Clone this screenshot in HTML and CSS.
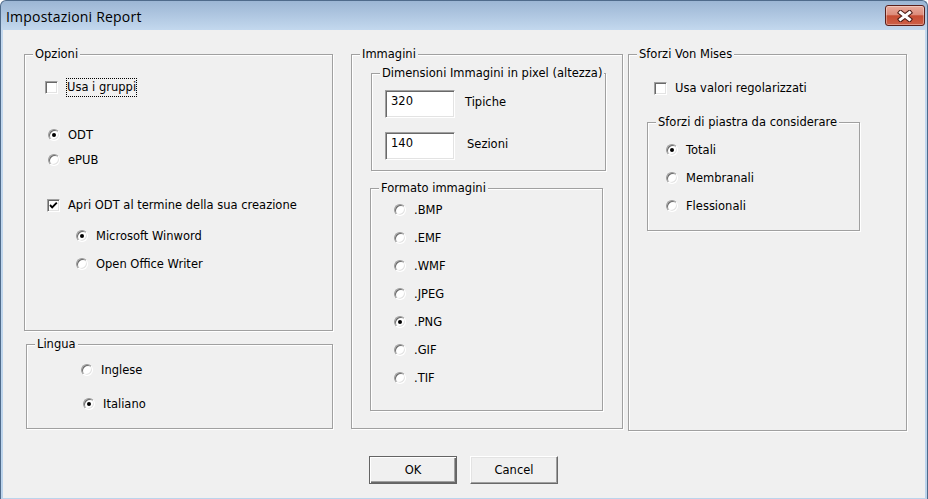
FILE: index.html
```html
<!DOCTYPE html>
<html lang="it">
<head>
<meta charset="utf-8">
<title>Impostazioni Report</title>
<link rel="stylesheet" href="styles.css">
</head>
<body>
<div class="window">
  <div class="titlebar">
    <span class="title">Impostazioni Report</span>
    <button class="close" aria-label="Chiudi">
      <svg width="16" height="12" viewBox="0 0 16 12">
        <path d="M3.5 2.5 L12.5 9.5 M12.5 2.5 L3.5 9.5" stroke="#4a1a14" stroke-width="5" stroke-linecap="square" fill="none"/>
        <path d="M3.5 2.5 L12.5 9.5 M12.5 2.5 L3.5 9.5" stroke="#ffffff" stroke-width="3" stroke-linecap="square" fill="none"/>
      </svg>
    </button>
  </div>
  <div class="client">
    <div class="panels">
      <div class="col-left">
        <div class="group g-opzioni">
          <span class="legend">Opzioni</span>
          <div class="row"><span class="check"></span><span class="focus">Usa i gruppi</span></div>
          <div class="row r-odt"><span class="radio on"></span><span>ODT</span></div>
          <div class="row r-epub"><span class="radio"></span><span>ePUB</span></div>
          <div class="row r-apri"><span class="check on"><svg width="13" height="13" viewBox="0 0 13 13"><path d="M3 6 L5.2 8.3 L9.8 3.7" stroke="#000" stroke-width="1.9" fill="none"/></svg></span><span>Apri ODT al termine della sua creazione</span></div>
          <div class="row r-word"><span class="radio on"></span><span>Microsoft Winword</span></div>
          <div class="row r-oo"><span class="radio"></span><span>Open Office Writer</span></div>
        </div>
        <div class="group g-lingua">
          <span class="legend">Lingua</span>
          <div class="row"><span class="radio"></span><span>Inglese</span></div>
          <div class="row r-ita"><span class="radio on"></span><span>Italiano</span></div>
        </div>
      </div>

      <div class="group g-immagini">
        <span class="legend">Immagini</span>
        <div class="group g-dim">
          <span class="legend">Dimensioni Immagini in pixel (altezza)</span>
          <div class="field-row">
            <div class="textbox">320</div>
            <span class="field-label">Tipiche</span>
          </div>
          <div class="field-row second">
            <div class="textbox">140</div>
            <span class="field-label wide">Sezioni</span>
          </div>
        </div>
        <div class="group g-formato">
          <span class="legend">Formato immagini</span>
          <div class="list">
            <div class="row"><span class="radio"></span><span>.BMP</span></div>
            <div class="row"><span class="radio"></span><span>.EMF</span></div>
            <div class="row"><span class="radio"></span><span>.WMF</span></div>
            <div class="row"><span class="radio"></span><span>.JPEG</span></div>
            <div class="row"><span class="radio on"></span><span>.PNG</span></div>
            <div class="row"><span class="radio"></span><span>.GIF</span></div>
            <div class="row"><span class="radio"></span><span>.TIF</span></div>
          </div>
        </div>
      </div>

      <div class="group g-sforzi">
        <span class="legend">Sforzi Von Mises</span>
        <div class="row r-reg"><span class="check"></span><span>Usa valori regolarizzati</span></div>
        <div class="group g-piastra">
          <span class="legend">Sforzi di piastra da considerare</span>
          <div class="list">
            <div class="row"><span class="radio on"></span><span>Totali</span></div>
            <div class="row"><span class="radio"></span><span>Membranali</span></div>
            <div class="row"><span class="radio"></span><span>Flessionali</span></div>
          </div>
        </div>
      </div>
    </div>

    <div class="buttons">
      <button class="btn default">OK</button>
      <button class="btn">Cancel</button>
    </div>
  </div>
</div>
</body>
</html>
```
FILE: styles.css
```css
* { box-sizing: border-box; }
html, body { margin: 0; padding: 0; }
body {
  width: 928px;
  height: 499px;
  overflow: hidden;
  background: #ffffff;
  font-family: "DejaVu Sans", sans-serif;
  font-size: 11.5px;
  color: #000;
}

.window {
  width: 928px;
  height: 499px;
  display: flex;
  flex-direction: column;
  border: 1px solid #4f6b8b;
  border-bottom: 0;
  border-radius: 6px 6px 0 0;
  padding: 0 2px 1px 2px;
  background: linear-gradient(to bottom, #9cb6d4 0px, #c3d8ee 29px, #bcd4ec 100%);
}

.titlebar {
  flex: none;
  height: 29px;
  display: flex;
  justify-content: space-between;
  align-items: flex-start;
}
.title {
  font-family: "Open Sans", sans-serif;
  font-size: 14px;
  letter-spacing: 0.2px;
  line-height: 19px;
  margin: 6px 0 0 3px;
  color: #000;
}
.close {
  margin-top: 4px;
  width: 40px;
  height: 21px;
  padding: 0;
  display: flex;
  align-items: center;
  justify-content: center;
  border: 1px solid #5a1f1a;
  border-radius: 3px;
  background: linear-gradient(to bottom, #e9ab9c 0%, #dd8c7b 45%, #c74d33 52%, #cd6048 100%);
  box-shadow: inset 0 0 0 1px rgba(255, 255, 255, 0.35);
}

.client {
  flex: 1;
  background: #f0f0f0;
  display: flex;
  flex-direction: column;
  padding: 24px 0 0 21px;
}
.panels {
  display: flex;
  align-items: flex-start;
}
.col-left {
  width: 309px;
  display: flex;
  flex-direction: column;
}

.group {
  position: relative;
  border: 1px solid #a0a0a0;
  box-shadow: inset 1px 1px 0 #ffffff, 1px 1px 0 #ffffff;
  flex: none;
}
.legend {
  position: absolute;
  top: -8px;
  left: 8px;
  padding: 0 2px;
  line-height: 14px;
  background: #f0f0f0;
  white-space: nowrap;
}

.row {
  display: flex;
  align-items: center;
  height: 16px;
  line-height: 16px;
  white-space: nowrap;
}
.list {
  display: flex;
  flex-direction: column;
  gap: 12px;
}

/* controls */
.check {
  flex: none;
  width: 13px;
  height: 13px;
  margin-right: 8px;
  background: #fff;
  border: 1px solid;
  border-color: #a0a0a0 #ffffff #ffffff #a0a0a0;
  box-shadow: inset 1px 1px 0 #696969, inset -1px -1px 0 #e3e3e3;
  position: relative;
}
.check svg {
  position: absolute;
  left: -1px;
  top: -1px;
}
.radio {
  flex: none;
  width: 12px;
  height: 12px;
  margin-right: 8px;
  border-radius: 50%;
  background: #fff;
  border: 1px solid;
  border-color: #9a9a9a #ffffff #ffffff #9a9a9a;
  box-shadow: inset 1px 1px 0 #6a6a6a, inset -1px -1px 0 #e3e3e3;
  position: relative;
}
.radio.on::after {
  content: "";
  position: absolute;
  left: 3px;
  top: 3px;
  width: 4px;
  height: 4px;
  border-radius: 50%;
  background: #000;
}
.focus {
  border: 1px dotted #000;
  padding: 1px 0;
  line-height: 15px;
}

/* Opzioni */
.g-opzioni {
  width: 309px;
  height: 277px;
  padding: 24px 0 0 20px;
}
.r-odt { margin: 32px 0 0 3px; }
.r-epub { margin: 9px 0 0 3px; }
.r-apri { margin: 29px 0 0 2px; }
.r-word { margin: 15px 0 0 31px; }
.r-oo { margin: 12px 0 0 31px; }

/* Lingua */
.g-lingua {
  width: 307px;
  height: 85px;
  margin: 13px 0 0 2px;
  padding: 17px 0 0 54px;
}
.r-ita { margin: 18px 0 0 2px; }

/* Immagini */
.g-immagini {
  width: 272px;
  height: 375px;
  margin-left: 18px;
  padding: 18px 0 0 19px;
}
.g-dim {
  width: 235px;
  height: 98px;
  padding: 16px 0 0 13px;
}
.field-row {
  display: flex;
  align-items: flex-start;
}
.field-row.second { margin-top: 14px; }
.textbox {
  width: 70px;
  height: 28px;
  background: #fff;
  border: 1px solid;
  border-color: #a0a0a0 #ffffff #ffffff #a0a0a0;
  box-shadow: inset 1px 1px 0 #696969, inset -1px -1px 0 #e3e3e3;
  padding: 4px 0 0 5px;
  line-height: 13px;
}
.field-label {
  line-height: 13px;
  margin: 6px 0 0 10px;
}
.field-label.wide { margin-left: 12px; }

.g-formato {
  width: 233px;
  height: 223px;
  margin: 17px 0 0 -1px;
  padding: 13px 0 0 23px;
}

/* Sforzi */
.g-sforzi {
  width: 279px;
  height: 377px;
  margin-left: 5px;
  padding: 25px 0 0 18px;
}
.r-reg { margin-left: 7px; }
.g-piastra {
  width: 213px;
  height: 109px;
  margin-top: 26px;
  padding: 19px 0 0 18px;
}

/* buttons */
.buttons {
  display: flex;
  gap: 13px;
  margin-top: 25px;
  padding-left: 345px;
}
.btn {
  width: 88px;
  height: 28px;
  padding: 0;
  font: inherit;
  color: #000;
  background: #f0f0f0;
  border: 1px solid;
  border-color: #ffffff #696969 #696969 #ffffff;
  box-shadow: inset -1px -1px 0 #a0a0a0, inset 1px 1px 0 #e3e3e3;
}
.btn.default {
  border-color: #646464;
  box-shadow: inset 1px 1px 0 #ffffff, inset -1px -1px 0 #696969, inset -2px -2px 0 #a0a0a0;
}
```
